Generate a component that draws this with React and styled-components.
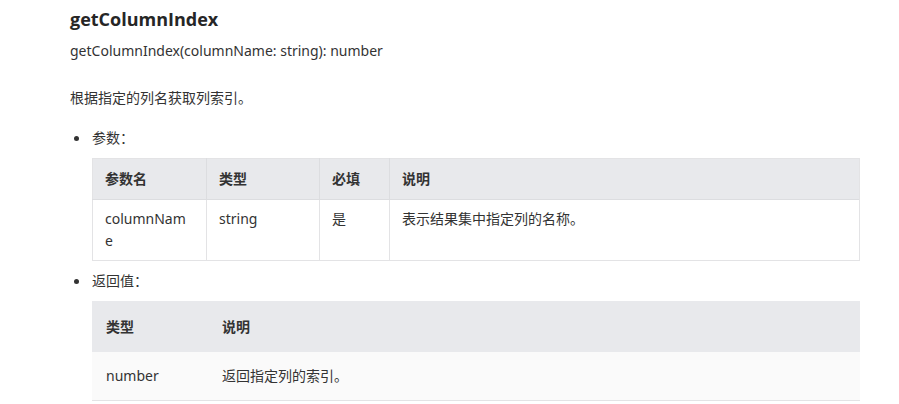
import React from "react";
import styled, { createGlobalStyle } from "styled-components";

const Global = createGlobalStyle`
  html, body { margin: 0; padding: 0; background: #fff; }
  body {
    font-family: "Noto Sans", "Noto Sans CJK SC", sans-serif;
    color: #333;
    font-size: 14px;
  }
`;

const Page = styled.div`
  padding: 5px 39px 0 70px;
`;

const Title = styled.h3`
  margin: 0;
  font-family: "Open Sans", "Noto Sans CJK SC", sans-serif;
  font-size: 18px;
  line-height: 28px;
  font-weight: 700;
  color: #262626;
`;

const Signature = styled.p`
  margin: 6px 0 0;
  line-height: 24px;
  color: #333;
`;

const Para = styled.p`
  margin: 23px 0 0;
  line-height: 24px;
  color: #333;
`;

const List = styled.ul`
  margin: 16px 0 0;
  padding: 0 0 0 22px;
  list-style: none;
`;

const Item = styled.li`
  position: relative;
  & + & { margin-top: 8px; }
  &::before {
    content: "";
    position: absolute;
    left: -18px;
    top: 10px;
    width: 5px;
    height: 5px;
    border-radius: 50%;
    background: #333;
  }
`;

const Label = styled.div`
  line-height: 24px;
  margin-bottom: 8px;
`;

const Table = styled.table`
  width: 100%;
  border-collapse: collapse;
  table-layout: fixed;
  border: ${(p) => (p.$grid ? "1px solid #e3e3e5" : "none")};
  border-bottom: 1px solid #e3e3e5;
`;

const Th = styled.th`
  background: #e8e9ec;
  text-align: left;
  font-weight: 700;
  color: #333;
  line-height: 22px;
  padding: ${(p) => (p.$loose ? "15px 14px 14px" : "9px 12px")};
  padding-right: ${(p) => p.$pr || undefined};
  border-right: ${(p) => (p.$grid ? "1px solid #dcdde0" : "none")};
  width: ${(p) => p.$w || "auto"};
`;

const Td = styled.td`
  background: ${(p) => (p.$alt ? "#fafafa" : "#fff")};
  vertical-align: top;
  color: #333;
  line-height: 22px;
  padding: ${(p) => (p.$loose ? "13px 14px" : "8px 12px")};
  padding-right: ${(p) => p.$pr || undefined};
  border-right: ${(p) => (p.$grid ? "1px solid #e3e3e5" : "none")};
  border-top: ${(p) => (p.$grid ? "1px solid #dcdde0" : "none")};
  height: ${(p) => p.$h || "auto"};
  word-break: break-all;
`;

export default function App() {
  return (
    <>
      <Global />
      <Page>
        <Title>getColumnIndex</Title>
        <Signature>getColumnIndex(columnName: string): number</Signature>
        <Para>根据指定的列名获取列索引。</Para>
        <List>
          <Item>
            <Label>参数：</Label>
            <Table $grid>
              <thead>
                <tr>
                  <Th $grid $w="84px" $pr="17px">参数名</Th>
                  <Th $grid $w="88px">类型</Th>
                  <Th $grid $w="45px">必填</Th>
                  <Th>说明</Th>
                </tr>
              </thead>
              <tbody>
                <tr>
                  <Td $grid $pr="17px">columnName</Td>
                  <Td $grid>string</Td>
                  <Td $grid>是</Td>
                  <Td $grid>表示结果集中指定列的名称。</Td>
                </tr>
              </tbody>
            </Table>
          </Item>
          <Item>
            <Label>返回值：</Label>
            <Table>
              <thead>
                <tr>
                  <Th $loose $w="88px">类型</Th>
                  <Th $loose>说明</Th>
                </tr>
              </thead>
              <tbody>
                <tr>
                  <Td $loose $alt>number</Td>
                  <Td $loose $alt>返回指定列的索引。</Td>
                </tr>
              </tbody>
            </Table>
          </Item>
        </List>
      </Page>
    </>
  );
}
